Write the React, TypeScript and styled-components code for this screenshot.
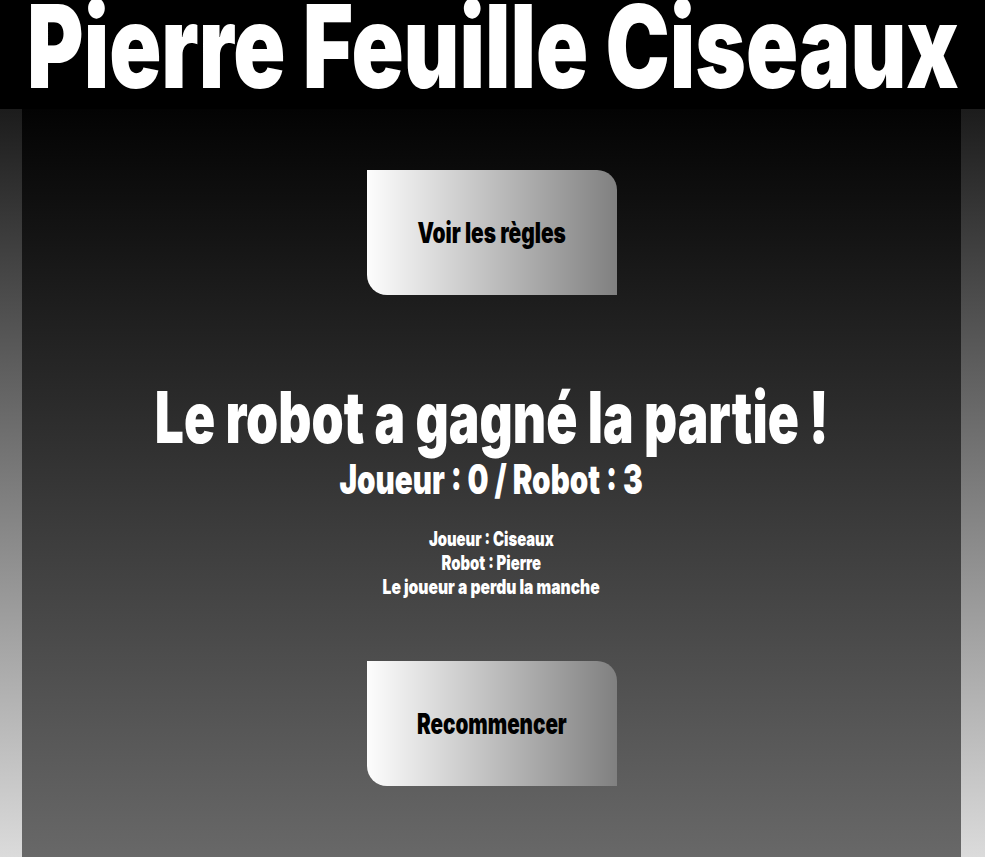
import React from "react";
import styled, { createGlobalStyle } from "styled-components";

const Global = createGlobalStyle`
  html {
    min-height: 100%;
    background: linear-gradient(180deg, #000000 0%, #dbdbdb 100%);
  }
  body {
    margin: 0;
    min-height: 100vh;
    font-family: Inter, "Noto Sans", "DejaVu Sans", sans-serif;
    font-weight: 900;
  }
`;

const Header = styled.header`
  height: 109px;
  background: #000;
  display: flex;
  justify-content: center;
  overflow: hidden;
`;

const Squeeze = styled.span<{ $sx: number }>`
  display: inline-block;
  white-space: nowrap;
  transform: scaleX(${(p) => p.$sx});
  transform-origin: center;
`;

const Title = styled.h1`
  margin: 0;
  font-size: 115px;
  line-height: 93px;
  padding-bottom: 16px;
  font-weight: 900;
  color: #fff;
  display: flex;
  justify-content: center;
`;

const Main = styled.main`
  margin: 0 24px 0 22px;
  min-height: calc(100vh - 109px);
  background: linear-gradient(180deg, #030303 0%, #686868 100%);
  display: flex;
  flex-direction: column;
  align-items: center;
  padding-top: 61px;
  box-sizing: border-box;
`;

const GreyButton = styled.button<{ $mt?: number }>`
  width: 250px;
  height: 125px;
  margin-top: ${(p) => p.$mt ?? 0}px;
  border: none;
  border-radius: 0 20px 0 20px;
  background: linear-gradient(90deg, #fdfdfd 0%, #808080 100%);
  color: #000;
  font-family: Inter, "Noto Sans", sans-serif;
  font-weight: 900;
  font-size: 28px;
  display: flex;
  align-items: center;
  justify-content: center;
  padding: 0;
  cursor: pointer;
`;

const Result = styled.h2`
  margin: 87px 0 0;
  font-size: 71px;
  line-height: 71px;
  font-weight: 900;
  color: #fff;
  display: flex;
  justify-content: center;
`;

const Score = styled.p`
  margin: 6px 0 0;
  font-size: 41px;
  line-height: 41px;
  color: #fff;
  display: flex;
  justify-content: center;
`;

const Round = styled.div`
  margin-top: 27px;
  display: flex;
  flex-direction: column;
  align-items: center;
`;

const RoundLine = styled.p`
  margin: 0;
  font-size: 20px;
  line-height: 24px;
  color: #fff;
`;

export default function App() {
  return (
    <>
      <Global />
      <Header>
        <Title>
          <Squeeze $sx={0.749}>Pierre Feuille Ciseaux</Squeeze>
        </Title>
      </Header>
      <Main>
        <GreyButton>
          <Squeeze $sx={0.745}>Voir les règles</Squeeze>
        </GreyButton>
        <Result>
          <Squeeze $sx={0.725}>Le robot a gagné la partie !</Squeeze>
        </Result>
        <Score>
          <Squeeze $sx={0.722}>Joueur : 0 / Robot : 3</Squeeze>
        </Score>
        <Round>
          <RoundLine>
            <Squeeze $sx={0.74}>Joueur : Ciseaux</Squeeze>
          </RoundLine>
          <RoundLine>
            <Squeeze $sx={0.74}>Robot : Pierre</Squeeze>
          </RoundLine>
          <RoundLine>
            <Squeeze $sx={0.78}>Le joueur a perdu la manche</Squeeze>
          </RoundLine>
        </Round>
        <GreyButton $mt={62}>
          <Squeeze $sx={0.735}>Recommencer</Squeeze>
        </GreyButton>
      </Main>
    </>
  );
}
